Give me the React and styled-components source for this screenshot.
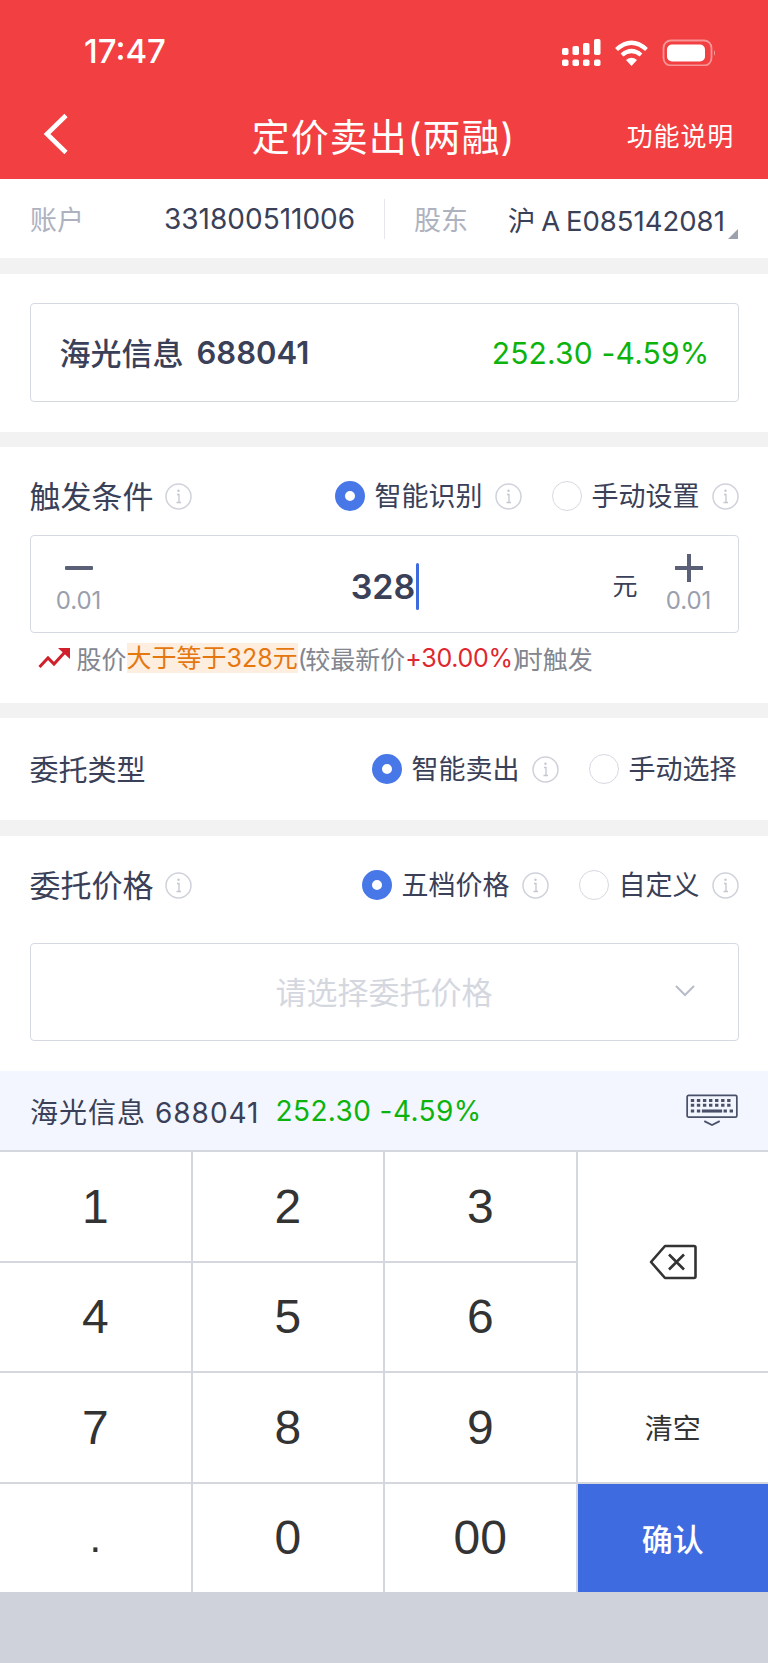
import React from "react";
import styled, { createGlobalStyle } from "styled-components";

const Global = createGlobalStyle`
  html, body { margin: 0; padding: 0; background: #fff; }
  body { font-family: "Inter", "Noto Sans CJK SC", sans-serif; }
  * { box-sizing: border-box; }
`;

const Page = styled.div`
  width: 768px;
  height: 1663px;
  display: flex;
  flex-direction: column;
  overflow: hidden;
  background: #fff;
  color: #3a4058;
`;

const Header = styled.header`
  background: #f13f42;
  color: #fff;
  height: 179px;
  flex: none;
`;
const StatusBar = styled.div`
  height: 102px;
  display: flex;
  align-items: center;
  justify-content: space-between;
  padding: 0 52px 0 84px;
`;
const Time = styled.span`
  font-weight: 500;
  font-size: 33px;
`;
const StatusIcons = styled.svg`
  display: block;
`;
const NavBar = styled.nav`
  height: 64px;
  margin-bottom: 13px;
  display: grid;
  grid-template-columns: 110px 1fr 120px;
  align-items: center;
  padding: 0 34px 0 43px;
`;
const Title = styled.h1`
  margin: 0;
  text-align: center;
  font-size: 38px;
  font-weight: 400;
  white-space: nowrap;
  letter-spacing: 1px;
`;
const NavLink = styled.span`
  font-size: 26px;
  text-align: right;
  white-space: nowrap;
  letter-spacing: 0.8px;
`;

const Band = styled.div`
  height: ${(p) => p.$h || 15}px;
  background: #f2f2f2;
  flex: none;
`;

const AccountRow = styled.div`
  height: 79px;
  flex: none;
  position: relative;
  display: grid;
  grid-template-columns: 134px 220px 30px 94px 1fr;
  align-items: center;
  padding-left: 30px;
`;
const AccountLabel = styled.span`
  font-size: 27px;
  color: #aeb2bf;
`;
const AccountValue = styled.span`
  font-size: ${(p) => p.$size || 28}px;
  word-spacing: ${(p) => p.$ws || 0}px;
  white-space: nowrap;
`;
const VDivider = styled.i`
  display: block;
  width: 1px;
  height: 40px;
  background: #e6e7ec;
`;
const Corner = styled.i`
  position: absolute;
  right: 30px;
  bottom: 19px;
  width: 0;
  height: 0;
  border-left: 10px solid transparent;
  border-bottom: 10px solid #9da1ad;
`;

const Section = styled.section`
  flex: none;
  padding: ${(p) => p.$pt || 0}px 29.5px ${(p) => p.$pb || 0}px;
`;

const Box = styled.div`
  height: ${(p) => p.$h || 98}px;
  border: 1.5px solid #d7d9e2;
  border-radius: 4px;
  display: flex;
  align-items: center;
  position: relative;
`;
const StockBox = styled(Box)`
  justify-content: space-between;
  padding: 0 28px 0 29px;
`;
const StockName = styled.span`
  font-size: 31px;
  font-weight: 500;
  display: flex;
  align-items: center;
  gap: 13px;
  white-space: nowrap;
`;
const StockCode = styled.span`
  font-weight: 600;
  font-size: 31px;
`;
const Quote = styled.span`
  color: #0db30d;
  font-size: ${(p) => p.$size || 30}px;
  letter-spacing: ${(p) => p.$ls || 0.2}px;
  white-space: pre;
`;

const Raised = styled.span`
  margin-bottom: ${(p) => p.$by || 3}px;
`;

const OptionRow = styled.div`
  display: flex;
  align-items: center;
  justify-content: space-between;
  height: ${(p) => p.$h || 30}px;
  margin-bottom: ${(p) => p.$mb || 0}px;
  padding-right: ${(p) => p.$pr || 0}px;
`;
const RowTitle = styled.div`
  display: flex;
  align-items: center;
  gap: 11px;
  font-size: ${(p) => p.$size || 31}px;
  white-space: nowrap;
`;
const Options = styled.div`
  display: flex;
  align-items: center;
  gap: 30px;
`;
const Option = styled.div`
  display: flex;
  align-items: center;
  font-size: 27px;
  white-space: nowrap;
`;
const Radio = styled.span`
  width: 30px;
  height: 30px;
  border-radius: 50%;
  margin-right: 10px;
  flex: none;
  background: #fff;
  border: ${(p) => (p.$on ? "10.5px solid #4878e8" : "1.5px solid #d7d9e2")};
`;
const InfoIcon = styled.svg`
  width: 27px;
  height: 27px;
  flex: none;
  margin-left: ${(p) => p.$ml ?? 12}px;
  display: block;
`;

const Stepper = styled.div`
  width: 50px;
  flex: none;
  display: flex;
  flex-direction: column;
  align-items: center;
  color: #9a9fae;
  font-size: 24px;
  gap: 3px;
`;
const StepIcon = styled.svg`
  display: block;
  width: 30px;
  height: 30px;
`;
const PriceBox = styled(Box)`
  padding: 0 24px 0 23px;
`;
const PriceValue = styled.div`
  flex: 1;
  text-align: center;
  font-size: 34px;
  font-weight: 600;
  padding: 4px 0 0 54px;
`;
const Caret = styled.i`
  display: inline-block;
  width: 3px;
  height: 47px;
  background: #3f6be0;
  border-radius: 2px;
  vertical-align: -11.5px;
  margin-left: 1px;
`;
const Unit = styled.span`
  font-size: 25px;
  margin-right: 26px;
`;
const Hint = styled.div`
  height: 30px;
  margin: 10px 0 30px 8px;
  display: flex;
  align-items: center;
  font-size: 25px;
  color: #83868f;
  white-space: pre;
`;
const HintIcon = styled.svg`
  width: 32px;
  height: 22px;
  margin-right: 7px;
  flex: none;
`;
const Mark = styled.span`
  background: #fdeee0;
  color: #e5770f;
  line-height: 30px;
`;
const OpenParen = styled.span`
  letter-spacing: -1.5px;
`;
const Up = styled.span`
  color: #e0262e;
  letter-spacing: -0.3px;
`;
const CloseParen = styled.span`
  letter-spacing: -4px;
`;

const SelectBox = styled(Box)`
  justify-content: center;
  font-size: 31px;
  color: #d5d7df;
`;
const Chevron = styled.svg`
  position: absolute;
  right: 42px;
  top: 40px;
  width: 22px;
  height: 14px;
`;

const QuoteBar = styled.div`
  margin-top: 30px;
  height: 79px;
  flex: none;
  background: #f3f6fe;
  display: flex;
  align-items: center;
  padding: 0 30px;
  gap: 16px;
  font-size: 28px;
`;
const BarName = styled.span`
  white-space: pre;
  letter-spacing: 1px;
`;
const KeyboardIcon = styled.svg`
  width: 52px;
  height: 35px;
  margin-left: auto;
  flex: none;
  margin-top: 2px;
`;

const Keypad = styled.div`
  flex: none;
  display: grid;
  grid-template-columns: repeat(4, 1fr);
  grid-template-rows: repeat(4, 108.5px);
  gap: 2px;
  padding: 2px 0 0;
  background: #d5d7df;
`;
const Key = styled.button`
  border: 0;
  margin: 0;
  padding: 0;
  background: ${(p) => (p.$primary ? "#3f6be0" : "#fff")};
  color: ${(p) => (p.$primary ? "#fff" : "#333")};
  font-family: "Liberation Sans", "Noto Sans CJK SC", sans-serif;
  font-size: ${(p) => p.$size || 48}px;
  font-weight: ${(p) => (p.$primary ? 500 : 400)};
  grid-row: ${(p) => (p.$span ? `span ${p.$span}` : "auto")};
  display: flex;
  align-items: center;
  justify-content: center;
`;
const Backspace = styled.svg`
  width: 48px;
  height: 36px;
`;
const Fill = styled.div`
  flex: 1;
  background: #cfd2db;
`;

const Info = ({ ml }) => (
  <InfoIcon $ml={ml} viewBox="0 0 27 27" fill="none">
    <circle cx="13.5" cy="13.5" r="12.5" stroke="#cfd2da" strokeWidth="1.5" />
    <path d="M12 11.5h2v8M11.5 19.5h4.5" stroke="#c4c7d1" strokeWidth="1.3" />
    <circle cx="13.5" cy="7.8" r="1.2" fill="#c4c7d1" />
  </InfoIcon>
);

const Choice = ({ on, label, info }) => (
  <Option>
    <Radio $on={on} />
    <Raised>{label}</Raised>
    {info && <Info />}
  </Option>
);

const StatusGlyphs = () => (
  <StatusIcons width="154" height="30" viewBox="0 0 154 30" fill="#fff">
    <g transform="translate(0,-34)">
      <rect x="0" y="46" width="6.5" height="7" rx="1.8" />
      <rect x="10.5" y="44" width="6.5" height="9" rx="1.8" />
      <rect x="21" y="41" width="6.5" height="12" rx="1.8" />
      <rect x="32" y="37" width="6.5" height="16" rx="1.8" />
      <rect x="0" y="57.5" width="6.5" height="6.5" rx="1.8" />
      <rect x="10.5" y="57.5" width="6.5" height="6.5" rx="1.8" />
      <rect x="21" y="57.5" width="6.5" height="6.5" rx="1.8" />
      <rect x="32" y="57.5" width="6.5" height="6.5" rx="1.8" />
      <g fill="none" stroke="#fff" strokeWidth="4.2">
        <path d="M54.5 47.5 Q69.5 34 84.5 47.5" />
        <path d="M60 53 Q69.5 45 79 53" />
      </g>
      <path d="M64 58 Q69.5 53.5 75 58 L69.5 64z" />
      <rect x="101.5" y="38.5" width="48" height="25" rx="7.5" fill="none" stroke="#fff" strokeOpacity="0.45" strokeWidth="1.8" />
      <rect x="105" y="42.5" width="38" height="17" rx="5" />
      <path d="M152 48 q2 3 0 6z" fillOpacity="0.5" />
    </g>
  </StatusIcons>
);

export default function App() {
  return (
    <Page>
      <Global />
      <Header>
        <StatusBar>
          <Time>17:47</Time>
          <StatusGlyphs />
        </StatusBar>
        <NavBar>
          <svg width="26" height="42" viewBox="0 0 26 42" fill="none">
            <path d="M23 2.5 4 21l19 18.5" stroke="#fff" strokeWidth="4.6" />
          </svg>
          <Title>定价卖出(两融)</Title>
          <NavLink>功能说明</NavLink>
        </NavBar>
      </Header>

      <AccountRow>
        <AccountLabel>账户</AccountLabel>
        <AccountValue>331800511006</AccountValue>
        <VDivider />
        <AccountLabel>股东</AccountLabel>
        <AccountValue $size={27.5} $ws={-2}>沪 A E085142081</AccountValue>
        <Corner />
      </AccountRow>
      <Band $h={16} />

      <Section $pt={29} $pb={30}>
        <StockBox $h={99}>
          <StockName><Raised>海光信息</Raised><StockCode>688041</StockCode></StockName>
          <Quote>252.30 -4.59%</Quote>
        </StockBox>
      </Section>
      <Band />

      <Section $pt={34}>
        <OptionRow $mb={24}>
          <RowTitle><Raised $by={4}>触发条件</Raised><Info ml={0} /></RowTitle>
          <Options>
            <Choice on label="智能识别" info />
            <Choice label="手动设置" info />
          </Options>
        </OptionRow>
        <PriceBox>
          <Stepper>
            <StepIcon viewBox="0 0 30 30"><rect x="1" y="13" width="28" height="4" rx="1" fill="#5a6078" /></StepIcon>
            0.01
          </Stepper>
          <PriceValue>328<Caret /></PriceValue>
          <Unit>元</Unit>
          <Stepper>
            <StepIcon viewBox="0 0 30 30"><path d="M1 13h12V1h4v12h12v4H17v12h-4V17H1z" fill="#5a6078" /></StepIcon>
            0.01
          </Stepper>
        </PriceBox>
        <Hint>
          <HintIcon viewBox="0 0 32 22" fill="none">
            <path d="M1.5 20 10 11l6 6L27 5" stroke="#d0202c" strokeWidth="3" />
            <path d="M20 1h12v11z" fill="#d0202c" />
          </HintIcon>
          股价<Mark>大于等于328元</Mark><OpenParen>(</OpenParen>较最新价<Up>+30.00%</Up><CloseParen>)</CloseParen>时触发
        </Hint>
      </Section>
      <Band />

      <Section>
        <OptionRow $h={102} $pr={2}>
          <RowTitle $size={29}><Raised $by={2}>委托类型</Raised></RowTitle>
          <Options>
            <Choice on label="智能卖出" info />
            <Choice label="手动选择" />
          </Options>
        </OptionRow>
      </Section>
      <Band $h={16} />

      <Section $pt={34}>
        <OptionRow $mb={43}>
          <RowTitle><Raised $by={4}>委托价格</Raised><Info ml={0} /></RowTitle>
          <Options>
            <Choice on label="五档价格" info />
            <Choice label="自定义" info />
          </Options>
        </OptionRow>
        <SelectBox>
          <Raised $by={4}>请选择委托价格</Raised>
          <Chevron viewBox="0 0 22 14" fill="none">
            <path d="M2 2l9 9 9-9" stroke="#b9bcc8" strokeWidth="2" />
          </Chevron>
        </SelectBox>
      </Section>

      <QuoteBar>
        <BarName>海光信息 688041</BarName>
        <Quote $size={28} $ls={0.4}>252.30 -4.59%</Quote>
        <KeyboardIcon viewBox="0 0 54 36" fill="none">
          <rect x="1.2" y="1.2" width="51.6" height="22.6" rx="1.5" stroke="#4a5069" strokeWidth="1.8" />
          <path d="M5 6.5h44M5 11.5h44M5 17.5h10M39 17.5h10" stroke="#4a5069" strokeWidth="3.2" strokeDasharray="3.5 2.79" />
          <rect x="16.5" y="15.9" width="21" height="3.2" fill="#4a5069" />
          <path d="M19 28l8 4 8-4" stroke="#4a5069" strokeWidth="1.8" />
        </KeyboardIcon>
      </QuoteBar>

      <Keypad>
        <Key>1</Key>
        <Key>2</Key>
        <Key>3</Key>
        <Key $span={2} aria-label="删除">
          <Backspace viewBox="0 0 48 36" fill="none">
            <path d="M16 2h29a1.5 1.5 0 0 1 1.5 1.5v29a1.5 1.5 0 0 1-1.5 1.5H16L2 18z" stroke="#333" strokeWidth="2.6" strokeLinejoin="round" />
            <path d="M20 10.5l15 15M35 10.5l-15 15" stroke="#333" strokeWidth="2.6" />
          </Backspace>
        </Key>
        <Key>4</Key>
        <Key>5</Key>
        <Key>6</Key>
        <Key>7</Key>
        <Key>8</Key>
        <Key>9</Key>
        <Key $size={28}>清空</Key>
        <Key $size={42}>.</Key>
        <Key>0</Key>
        <Key>00</Key>
        <Key $primary $size={31}>确认</Key>
      </Keypad>
      <Fill />
    </Page>
  );
}
